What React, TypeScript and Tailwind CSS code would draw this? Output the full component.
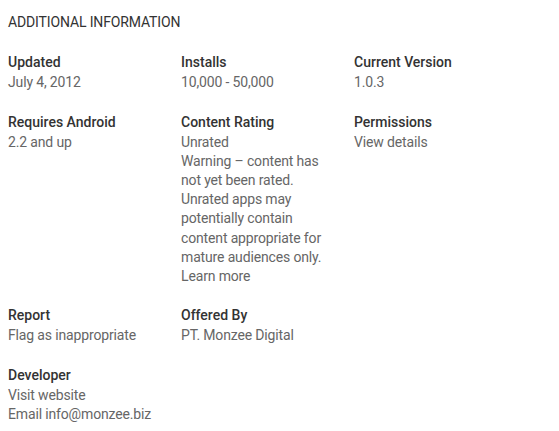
import React from "react";

type Item = {
  label: string;
  lines: string[];
  narrow?: boolean;
};

const rows: Item[][] = [
  [
    { label: "Updated", lines: ["July 4, 2012"] },
    { label: "Installs", lines: ["10,000 - 50,000"] },
    { label: "Current Version", lines: ["1.0.3"] },
  ],
  [
    { label: "Requires Android", lines: ["2.2 and up"] },
    {
      label: "Content Rating",
      lines: [
        "Unrated",
        "Warning – content has not yet been rated. Unrated apps may potentially contain content appropriate for mature audiences only.",
        "Learn more",
      ],
      narrow: true,
    },
    { label: "Permissions", lines: ["View details"] },
  ],
  [
    { label: "Report", lines: ["Flag as inappropriate"] },
    { label: "Offered By", lines: ["PT. Monzee Digital"] },
  ],
  [{ label: "Developer", lines: ["Visit website", "Email info@monzee.biz"] }],
];

const InfoBlock = ({ item }: { item: Item }) => (
  <div className="w-[173px] shrink-0">
    <div className="mb-px text-[14px] leading-[20px] font-medium text-[#333333]">{item.label}</div>
    {item.lines.map((line, i) => (
      <div
        key={i}
        className={`text-[14px] leading-[19.2px] tracking-[-0.15px] text-[#666666] ${item.narrow ? "w-[150px]" : ""}`}
      >
        {line}
      </div>
    ))}
  </div>
);

export default function App() {
  return (
    <div className="w-[559px] h-[431px] bg-white px-2 pt-[12px] font-['Roboto',sans-serif]">
      <h2 className="text-[14px] leading-[20px] font-normal text-[#333333] tracking-[-0.14px]">
        ADDITIONAL INFORMATION
      </h2>
      <div className="flex flex-col gap-[19.3px] mt-[20px]">
        {rows.map((row, r) => (
          <div key={r} className="flex">
            {row.map((item) => (
              <InfoBlock key={item.label} item={item} />
            ))}
          </div>
        ))}
      </div>
    </div>
  );
}
